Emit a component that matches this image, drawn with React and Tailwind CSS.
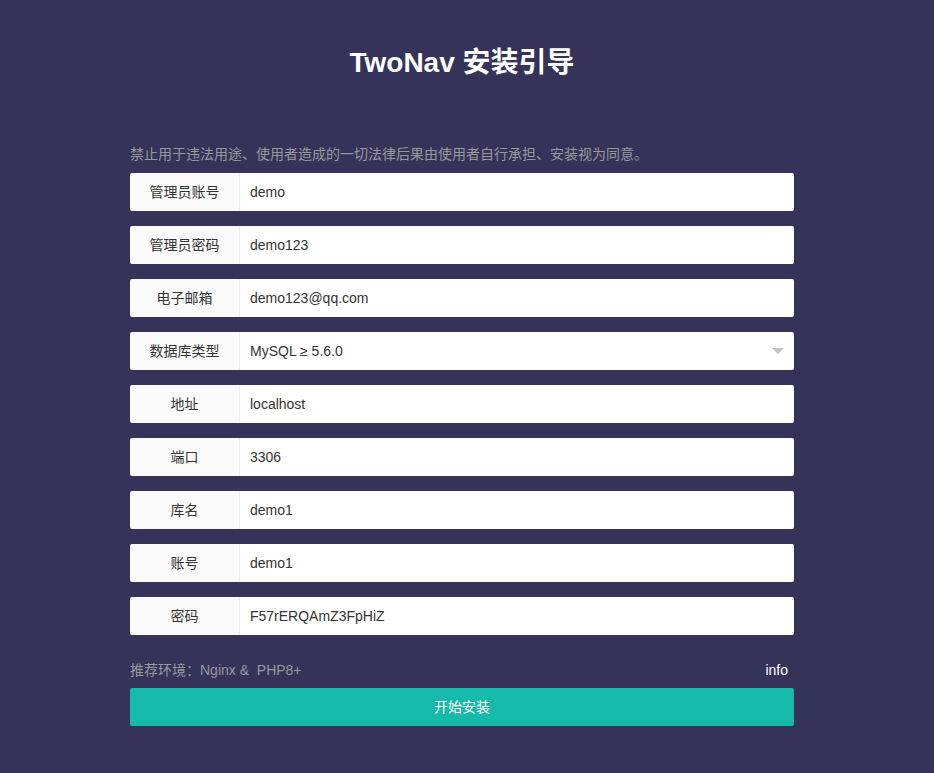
const fields = [
  { label: "管理员账号", value: "demo" },
  { label: "管理员密码", value: "demo123" },
  { label: "电子邮箱", value: "demo123@qq.com" },
  { label: "数据库类型", value: "MySQL ≥ 5.6.0", select: true },
  { label: "地址", value: "localhost" },
  { label: "端口", value: "3306" },
  { label: "库名", value: "demo1" },
  { label: "账号", value: "demo1" },
  { label: "密码", value: "F57rERQAmZ3FpHiZ" },
];

const App = () => {
  return (
    <div
      className="min-h-[773px] w-full bg-[#35335a] text-[14px]"
      style={{ fontFamily: '"Liberation Sans", Arial, "Noto Sans CJK SC", sans-serif' }}
    >
      <div className="w-[664px] ml-[130px] pt-[43px]">
        <h1 className="text-[28px] font-bold text-white text-center leading-[40px]">TwoNav 安装引导</h1>
        <p className="mt-[61px] text-[#999] leading-[20px] text-[14px]">
          禁止用于违法用途、使用者造成的一切法律后果由使用者自行承担、安装视为同意。
        </p>
        <div className="flex flex-col gap-[15px] mt-[9px]">
          {fields.map((f) => (
            <div key={f.label} className="flex h-[38px] rounded-[2px] overflow-hidden">
              <div className="w-[110px] shrink-0 bg-[#fafafa] border-r border-[#eee] flex items-center justify-center text-[#333]">
                {f.label}
              </div>
              <div className="flex-1 bg-white flex items-center pl-[10px] pr-[14px] text-[#333] justify-between">
                <span>{f.value}</span>
                {f.select && (
                  <span className="w-0 h-0 border-l-[6px] border-r-[6px] border-t-[6px] border-l-transparent border-r-transparent border-t-[#c2c2c2] mr-[-4px]" />
                )}
              </div>
            </div>
          ))}
        </div>
        <div className="flex justify-between items-center mt-[25px] leading-[20px]">
          <span className="text-[#999]">推荐环境：Nginx &amp;&nbsp; PHP8+</span>
          <span className="text-white mr-[6px]">info</span>
        </div>
        <button className="mt-[8px] w-full h-[38px] bg-[#16baaa] text-white rounded-[2px] text-[14px]">
          开始安装
        </button>
      </div>
    </div>
  );
};

export default App;
